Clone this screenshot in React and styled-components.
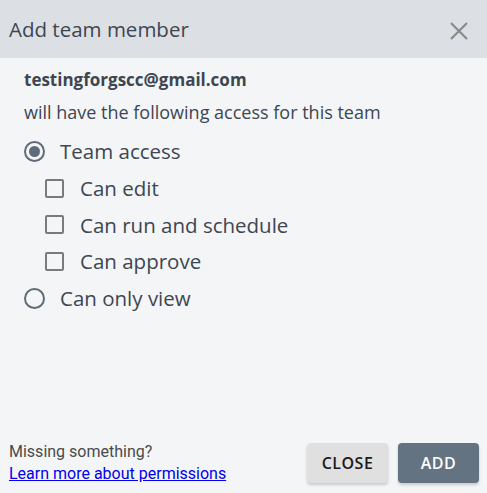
import React, { useState } from "react";
import styled, { createGlobalStyle } from "styled-components";

const GlobalStyle = createGlobalStyle`
  html, body {
    margin: 0;
    padding: 0;
    height: 100%;
  }
  body {
    font-family: "Open Sans", Lato, sans-serif;
    background: #f4f5f7;
  }
  #root {
    height: 100%;
  }
`;

const Dialog = styled.div`
  display: flex;
  flex-direction: column;
  height: 100vh;
  background: #f4f5f7;
  color: #3d4651;
`;

const Header = styled.div`
  display: flex;
  align-items: center;
  justify-content: space-between;
  height: 58px;
  padding: 0 18px 0 9px;
  background: #dce0e4;
  flex-shrink: 0;

  h2 {
    margin: 0;
    font-size: 20.5px;
    font-weight: 400;
    color: #3d4651;
  }
`;

const CloseIcon = styled.button`
  border: none;
  background: none;
  padding: 0;
  width: 20px;
  height: 20px;
  cursor: pointer;
  margin-top: 4px;
`;

const Content = styled.div`
  flex: 1;
  padding: 11px 24px 0;
`;

const Email = styled.div`
  font-size: 17px;
  font-weight: 700;
  line-height: 22px;
  margin-bottom: 10px;
`;

const Note = styled.div`
  font-size: 18px;
  line-height: 22px;
  margin-bottom: 10px;
`;

const Option = styled.label`
  display: flex;
  align-items: center;
  gap: ${(props) => (props.nested ? "16px" : "15px")};
  height: 36.7px;
  padding-left: ${(props) => (props.nested ? "21px" : "0")};
  font-size: 20.5px;
  color: #3d4651;
  cursor: pointer;
`;

const Radio = styled.span`
  box-sizing: border-box;
  width: 21px;
  height: 21px;
  border: 2px solid #5f6b78;
  border-radius: 50%;
  display: flex;
  align-items: center;
  justify-content: center;
  flex-shrink: 0;

  &::after {
    content: "";
    width: 11px;
    height: 11px;
    border-radius: 50%;
    background: #5f6b78;
    display: ${(props) => (props.checked ? "block" : "none")};
  }
`;

const Check = styled.span`
  box-sizing: border-box;
  width: 19px;
  height: 19px;
  border: 2px solid #777b80;
  border-radius: 2px;
  flex-shrink: 0;
  background: ${(props) => (props.checked ? "#5f6b78" : "transparent")};
`;

const Footer = styled.div`
  display: flex;
  align-items: center;
  justify-content: space-between;
  padding: 0 8px 8px 9px;
`;

const Help = styled.div`
  font-family: Roboto, sans-serif;
  font-size: 16px;
  line-height: 22px;
  color: #4a4a4a;

  a {
    color: #0000ee;
    text-decoration: underline;
    display: block;
  }
`;

const Buttons = styled.div`
  display: flex;
  gap: 10px;
`;

const Button = styled.button`
  width: 81px;
  height: 40px;
  border: none;
  border-radius: 4px;
  font-family: "Open Sans", sans-serif;
  font-size: 16px;
  font-weight: 600;
  text-transform: uppercase;
  letter-spacing: 0.5px;
  cursor: pointer;
  background: ${(props) => (props.primary ? "#647382" : "#e0e0e0")};
  color: ${(props) => (props.primary ? "#fff" : "#1a1a1a")};
  box-shadow: 0 2px 3px rgba(0, 0, 0, 0.18);
`;

const App = () => {
  const [access, setAccess] = useState("team");
  const [perms, setPerms] = useState({ edit: false, run: false, approve: false });

  const toggle = (key) => setPerms({ ...perms, [key]: !perms[key] });

  return (
    <Dialog>
      <GlobalStyle />
      <Header>
        <h2>Add team member</h2>
        <CloseIcon aria-label="close">
          <svg width="20" height="20" viewBox="0 0 20 20">
            <path d="M2 2 L18 18 M18 2 L2 18" stroke="#8a8a8a" strokeWidth="2.2" />
          </svg>
        </CloseIcon>
      </Header>
      <Content>
        <Email>testingforgscc@gmail.com</Email>
        <Note>will have the following access for this team</Note>
        <Option onClick={() => setAccess("team")}>
          <Radio checked={access === "team"} />
          Team access
        </Option>
        <Option nested onClick={() => toggle("edit")}>
          <Check checked={perms.edit} />
          Can edit
        </Option>
        <Option nested onClick={() => toggle("run")}>
          <Check checked={perms.run} />
          Can run and schedule
        </Option>
        <Option nested onClick={() => toggle("approve")}>
          <Check checked={perms.approve} />
          Can approve
        </Option>
        <Option onClick={() => setAccess("view")}>
          <Radio checked={access === "view"} />
          Can only view
        </Option>
      </Content>
      <Footer>
        <Help>
          Missing something?
          <a href="#permissions">Learn more about permissions</a>
        </Help>
        <Buttons>
          <Button>Close</Button>
          <Button primary>Add</Button>
        </Buttons>
      </Footer>
    </Dialog>
  );
};

export default App;
